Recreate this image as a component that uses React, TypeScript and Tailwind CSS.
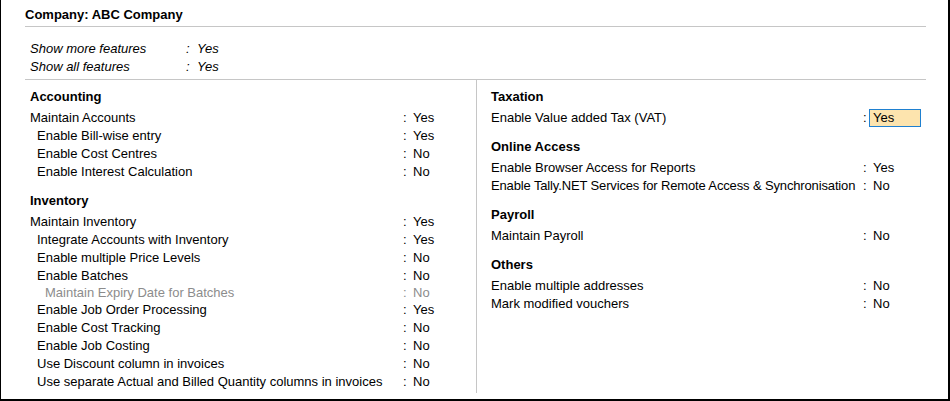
type Row = {
  label: string;
  value: string;
  indent?: 0 | 1 | 2;
  muted?: boolean;
  focus?: boolean;
  tight?: boolean;
};
type Section = { title: string; rows: Row[] };

// ─────────────────────────────────────────────────────────────
// Data
// ─────────────────────────────────────────────────────────────

const leftSections: Section[] = [
  {
    title: "Accounting",
    rows: [
      { label: "Maintain Accounts", value: "Yes" },
      { label: "Enable Bill-wise entry", value: "Yes", indent: 1 },
      { label: "Enable Cost Centres", value: "No", indent: 1 },
      { label: "Enable Interest Calculation", value: "No", indent: 1 },
    ],
  },
  {
    title: "Inventory",
    rows: [
      { label: "Maintain Inventory", value: "Yes" },
      { label: "Integrate Accounts with Inventory", value: "Yes", indent: 1 },
      { label: "Enable multiple Price Levels", value: "No", indent: 1 },
      { label: "Enable Batches", value: "No", indent: 1 },
      { label: "Maintain Expiry Date for Batches", value: "No", indent: 2, muted: true },
      { label: "Enable Job Order Processing", value: "Yes", indent: 1 },
      { label: "Enable Cost Tracking", value: "No", indent: 1 },
      { label: "Enable Job Costing", value: "No", indent: 1 },
      { label: "Use Discount column in invoices", value: "No", indent: 1 },
      { label: "Use separate Actual and Billed Quantity columns in invoices", value: "No", indent: 1 },
    ],
  },
];

const rightSections: Section[] = [
  {
    title: "Taxation",
    rows: [{ label: "Enable Value added Tax (VAT)", value: "Yes", focus: true }],
  },
  {
    title: "Online Access",
    rows: [
      { label: "Enable Browser Access for Reports", value: "Yes" },
      {
        label: "Enable Tally.NET Services for Remote Access & Synchronisation",
        value: "No",
        tight: true,
      },
    ],
  },
  {
    title: "Payroll",
    rows: [{ label: "Maintain Payroll", value: "No" }],
  },
  {
    title: "Others",
    rows: [
      { label: "Enable multiple addresses", value: "No" },
      { label: "Mark modified vouchers", value: "No" },
    ],
  },
];

const indents = ["pl-0", "pl-[7px]", "pl-[15px]"];

// ─────────────────────────────────────────────────────────────
// Pieces
// ─────────────────────────────────────────────────────────────

function FeatureRow({ row, labelWidth }: { row: Row; labelWidth: string }) {
  const height = row.muted ? "h-[16px] leading-[16px] text-[#8c8c8c]" : "h-[18px] leading-[18px] text-black";
  return (
    <div className={`flex ${height}`}>
      <div
        className={`${labelWidth} shrink-0 whitespace-nowrap ${indents[row.indent ?? 0]} ${
          row.tight ? "tracking-[-0.14px]" : ""
        }`}
      >
        {row.label}
      </div>
      <div className="w-[10px] shrink-0">:</div>
      {row.focus ? (
        <div className="w-[52px] -ml-[4px] border border-[#1f80d0] bg-[#fde4ae] pl-[3px] leading-[16px]">
          {row.value}
        </div>
      ) : (
        <div>{row.value}</div>
      )}
    </div>
  );
}

function SectionBlock({ section, labelWidth }: { section: Section; labelWidth: string }) {
  return (
    <div className="mb-[11px]">
      <div className="h-[18px] leading-[18px] font-bold mb-[3px]">{section.title}</div>
      {section.rows.map((r) => (
        <FeatureRow key={r.label} row={r} labelWidth={labelWidth} />
      ))}
    </div>
  );
}

export default function App() {
  return (
    <div
      className="w-[950px] h-[401px] bg-white border-l border-r-2 border-b-2 border-black text-[13px] text-black overflow-hidden"
      style={{ fontFamily: '"Liberation Sans", Arial, sans-serif' }}
    >
      {/* Header */}
      <div className="pl-[24px]">
        <div className="pt-[6px] h-[26px] leading-[18px] font-bold">Company: ABC Company</div>
        <div className="w-[901px] h-px bg-[#c6c6c6]" />
        <div className="pt-[13px] pb-[3px] pl-[5px] italic">
          <div className="flex h-[18px] leading-[18px]">
            <div className="w-[156px]">Show more features</div>
            <div className="w-[11px]">:</div>
            <div>Yes</div>
          </div>
          <div className="flex h-[18px] leading-[18px]">
            <div className="w-[156px]">Show all features</div>
            <div className="w-[11px]">:</div>
            <div>Yes</div>
          </div>
        </div>
        <div className="w-[901px] h-px bg-[#c6c6c6]" />
      </div>

      {/* Columns */}
      <div className="flex h-[313px]">
        <div className="w-[476px] shrink-0 border-r border-[#c6c6c6] pt-[8px] pl-[29px]">
          {leftSections.map((s) => (
            <SectionBlock key={s.title} section={s} labelWidth="w-[373px]" />
          ))}
        </div>
        <div className="flex-1 pt-[8px] pl-[14px]">
          {rightSections.map((s) => (
            <SectionBlock key={s.title} section={s} labelWidth="w-[372px]" />
          ))}
        </div>
      </div>
    </div>
  );
}
